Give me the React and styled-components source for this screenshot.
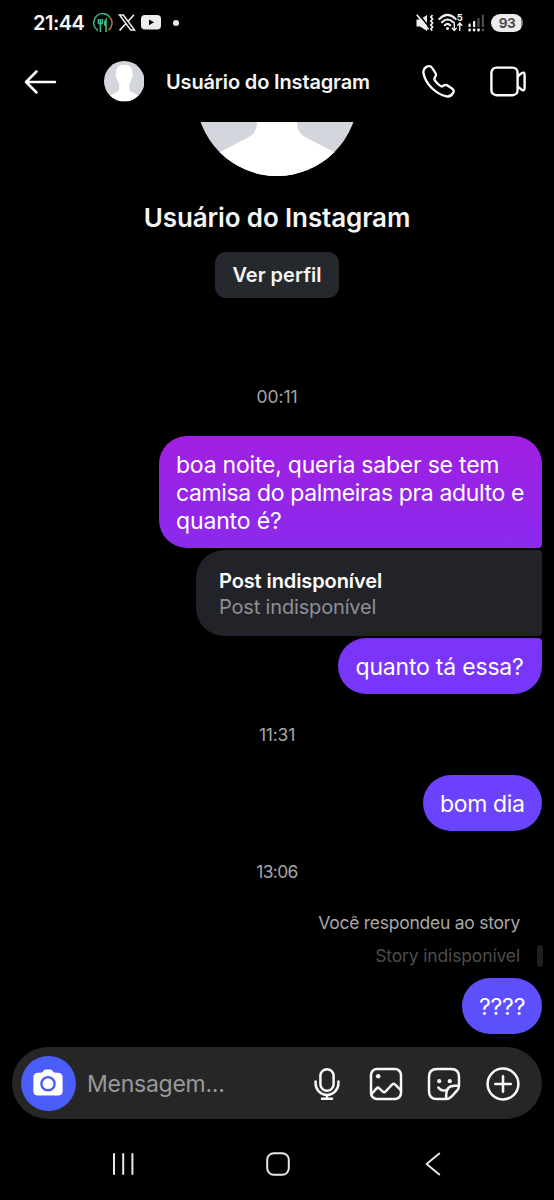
import styled, { createGlobalStyle } from "styled-components";

const GlobalStyle = createGlobalStyle`
  * {
    box-sizing: border-box;
  }
  body {
    margin: 0;
    background: #000;
    color: #f5f5f5;
    font-family: Inter, Roboto, sans-serif;
  }
  svg {
    display: block;
    flex: none;
  }
`;

const Screen = styled.main`
  width: 554px;
  height: 1200px;
  display: flex;
  flex-direction: column;
  overflow: hidden;
  background: #000;
`;

const StatusBar = styled.div`
  height: 45px;
  flex: none;
  display: flex;
  align-items: center;
  justify-content: space-between;
  padding: 0 31px 0 33px;
`;
const StatusLeft = styled.div`
  display: flex;
  align-items: center;
`;
const StatusRight = styled.div`
  display: flex;
  align-items: center;
`;
const Clock = styled.span`
  width: 60px;
  font-size: 20px;
  font-weight: 600;
  letter-spacing: -0.5px;
`;
const Gap = styled.span`
  width: ${(p) => p.$w}px;
`;
const Dot = styled.span`
  width: 6px;
  height: 6px;
  border-radius: 50%;
  background: #f0f0f0;
`;
const Battery = styled.span`
  width: 32px;
  height: 18px;
  border-radius: 9px;
  background: linear-gradient(90deg, #ececec 93%, #8a8a8a 93%);
  color: #4a4a4a;
  font-size: 13.5px;
  font-weight: 700;
  line-height: 18px;
  text-align: center;
  letter-spacing: -0.4px;
`;

const Header = styled.header`
  height: 77px;
  flex: none;
  display: flex;
  align-items: center;
  padding: 0 28px 4px 24px;
`;
const HeaderTitle = styled.h1`
  flex: 1;
  margin: 1px 0 0 22px;
  font-size: 20px;
  font-weight: 600;
  letter-spacing: -0.15px;
  white-space: nowrap;
`;
const BackIcon = styled.svg`
  margin-right: 46.5px;
`;
const PhoneIcon = styled.svg`
  margin-right: 35px;
`;

const Thread = styled.section`
  height: 925px;
  flex: none;
  display: flex;
  flex-direction: column;
  align-items: center;
  overflow: hidden;
  padding: 0 12px;
`;
const ProfilePic = styled.div`
  margin-top: -108px;
`;
const ProfileName = styled.h2`
  margin: 26px 0 18px;
  font-size: 26px;
  line-height: 32px;
  font-weight: 600;
  letter-spacing: -0.13px;
`;
const ProfileButton = styled.button`
  width: 124px;
  height: 46px;
  flex: none;
  padding: 0;
  border: 0;
  border-radius: 11px;
  background: #25282d;
  color: #f5f5f5;
  font: 600 20px Inter, sans-serif;
`;
const TimeStamp = styled.time`
  margin: ${(p) => p.$margin};
  font-size: 17.5px;
  line-height: 20px;
  letter-spacing: ${(p) => p.$track}px;
  color: #a3a5a8;
`;
const Bubble = styled.div`
  align-self: flex-end;
  width: ${(p) => p.$w}px;
  flex: none;
  padding: 14.6px 0 13.4px 17.5px;
  border-radius: ${(p) => p.$radius || "28px"};
  background: ${(p) => p.$bg};
  color: #fff;
  font-size: 23px;
  line-height: 28px;
`;
const Line = styled.div`
  white-space: nowrap;
  letter-spacing: ${(p) => p.$track}px;
`;
const PostCard = styled.div`
  align-self: flex-end;
  width: 346px;
  height: 86px;
  flex: none;
  margin: 2px 0;
  padding: 18px 23px;
  border-radius: 28px 4px 4px 28px;
  background: #222328;
  font-size: 20px;
  line-height: 26px;
`;
const PostTitle = styled.div`
  font-weight: 600;
  letter-spacing: -0.1px;
  color: #fff;
`;
const PostText = styled.div`
  letter-spacing: -0.16px;
  color: #8f9094;
`;
const StoryNote = styled.div`
  align-self: flex-end;
  margin-right: 22px;
  font-size: 17.5px;
  line-height: 20px;
  letter-spacing: -0.25px;
  color: #a8a8a8;
`;
const StoryQuote = styled.div`
  align-self: flex-end;
  display: flex;
  align-items: center;
  gap: 17px;
  height: 22px;
  margin: 12px -1px 11.5px 0;
  font-size: 17.5px;
  line-height: 22px;
  letter-spacing: -0.14px;
  color: #4c4c4c;
`;
const QuoteBar = styled.span`
  width: 6px;
  height: 22px;
  border-radius: 3px;
  background: #1f1f1f;
`;

const Composer = styled.div`
  height: 72px;
  flex: none;
  display: flex;
  align-items: center;
  margin: 0 12px;
  padding: 0 22.5px 0 8.5px;
  border-radius: 36px;
  background: #262626;
`;
const CameraButton = styled.div`
  width: 55px;
  height: 55px;
  flex: none;
  display: flex;
  align-items: center;
  justify-content: center;
  border-radius: 50%;
  background: #4a5df9;
`;
const Placeholder = styled.span`
  flex: 1;
  margin: 1px 0 0 11.5px;
  font-size: 23px;
  letter-spacing: -0.25px;
  color: #98999b;
`;
const Tools = styled.div`
  display: flex;
  align-items: center;
  gap: 24.5px;
  padding-top: 2px;
`;

const NavBar = styled.nav`
  flex: 1;
  display: flex;
  align-items: center;
  justify-content: space-between;
  padding: 8px 113px 0 112px;
`;
const HomeKey = styled.svg`
  position: relative;
  left: -1.5px;
`;

function Avatar({ size }) {
  return (
    <svg width={size} height={size} viewBox="0 0 162 162">
      <clipPath id={"round" + size}>
        <circle cx="81" cy="81" r="81" />
      </clipPath>
      <g clipPath={`url(#round${size})`}>
        <rect width="162" height="162" fill="#d3d6dc" />
        <path
          fill="#fff"
          d="M81 15C59 15 47 28 48 48C46 52 46 60 50 65C51 76 55 84 60 89L61 108C61 116 58 120 53 123L24 138C15 143 9 150 5 162H157C153 150 147 143 138 138L109 123C104 120 101 116 101 108L102 89C107 84 111 76 112 65C116 60 116 52 114 48C115 28 103 15 81 15Z"
        />
      </g>
    </svg>
  );
}

function StatusIcons() {
  return (
    <>
      <svg width="20" height="20" viewBox="0 0 20 20" fill="none">
        <path d="M5 17.3A9 9 0 1 1 17.3 4.8" stroke="#35b582" strokeWidth="1.5" />
        <path d="M17.3 4.8A9 9 0 0 1 15.5 17.2" stroke="#b9782e" strokeWidth="1.5" />
        <path d="M5.4 6V9.5Q5.4 11 7.4 11T9.4 9.5V6M7.4 6V19" stroke="#38c48c" strokeWidth="1.5" />
        <path d="M13 19V6.5Q11.4 8.5 11.7 12H13" stroke="#38c48c" strokeWidth="1.5" fill="#38c48c" />
      </svg>
      <Gap $w={5} />
      <svg width="18" height="17" viewBox="0 0 18 17" fill="none" stroke="#f0f0f0">
        <path d="M1.5 1H5.3L16.5 16H12.7Z" strokeWidth="1.5" />
        <path d="M16 .7L10.2 7.2M7.8 9.8L1.6 16.4" strokeWidth="1.6" />
      </svg>
      <Gap $w={5} />
      <svg width="20" height="15" viewBox="0 0 20 15">
        <rect width="20" height="14.5" rx="4" fill="#ededed" />
        <path d="M8 4.4V10.2L13 7.3Z" fill="#000" />
      </svg>
      <Gap $w={12} />
      <Dot />
    </>
  );
}

function SignalIcons() {
  return (
    <>
      <svg width="19" height="18" viewBox="0 0 19 18" fill="none" stroke="#f0f0f0">
        <path d="M1.5 5.4H5L12 1V17L5 12.4H1.5Z" fill="#f0f0f0" stroke="none" />
        <path d="M3.6 0L14.6 13.6" stroke="#000" strokeWidth="1.6" />
        <path d="M1.8 .8L13.4 15.4" strokeWidth="1.7" />
        <path d="M17.6 1.2L15.8 3L17.6 5L15.8 7L17.6 9L15.8 11L17.6 13L15.8 15L17.2 16.6" strokeWidth="1.7" />
      </svg>
      <Gap $w={4} />
      <svg width="26" height="19" viewBox="0 0 26 19" fill="none" stroke="#f0f0f0" strokeLinecap="round">
        <path d="M1.3 6Q9.5 -2.2 17.7 6M4 9.2Q9.5 3.8 15.2 9.2M6.8 12.2Q9.5 9.6 12.3 12.2" strokeWidth="2.1" />
        <circle cx="9.5" cy="15.6" r="1.5" fill="#f0f0f0" stroke="none" />
        <path d="M16.3 10V17.2M14.2 15.3L16.3 17.4L18.3 15.3M21.8 17.3V10.2M19.8 12.2L21.8 10L23.9 12.2" strokeWidth="1.4" />
        <text x="18.8" y="7.6" fontSize="9.5" fontWeight="700" fill="#f0f0f0" stroke="none">5</text>
      </svg>
      <Gap $w={4} />
      <svg width="17" height="18" viewBox="0 0 17 18">
        <g fill="#f0f0f0">
          <rect x=".5" y="9.5" width="2.2" height="3.6" rx=".6" />
          <rect x="5" y="7" width="2.2" height="6.1" rx=".6" />
          <rect x=".3" y="14.6" width="2.6" height="2.8" rx=".8" />
          <rect x="4.8" y="14.6" width="2.6" height="2.8" rx=".8" />
          <rect x="9.2" y="14.6" width="2.6" height="2.8" rx=".8" />
        </g>
        <g fill="#4d4d4d">
          <rect x="9.4" y="4" width="2.2" height="9.1" rx=".6" />
          <rect x="13.8" y=".8" width="2.2" height="12.3" rx=".6" />
          <rect x="13.6" y="14.6" width="2.6" height="2.8" rx=".8" />
        </g>
      </svg>
      <Gap $w={6} />
    </>
  );
}

function ComposerIcons() {
  const stroke = {
    fill: "none",
    stroke: "#f7f7f7",
    strokeWidth: 2.5,
    strokeLinecap: "round",
    strokeLinejoin: "round",
  };
  return (
    <Tools>
      <svg width="34" height="34" viewBox="0 0 34 34" {...stroke}>
        <rect x="10.4" y="2.2" width="13.2" height="21.6" rx="6.6" />
        <path d="M5.6 14.5V16.5A11.4 11.4 0 0 0 28.4 16.5V14.5M17 28V31.5M12 31.7H22" />
      </svg>
      <svg width="34" height="34" viewBox="0 0 34 34" {...stroke}>
        <rect x="2" y="2" width="30" height="30" rx="6" />
        <circle cx="9.2" cy="9.2" r="2.3" fill="#f7f7f7" stroke="none" />
        <path d="M2.5 27L7.6 21.4Q8.9 20 10.3 21.3L13.8 24.6Q15.2 25.9 16.5 24.5L23.3 17.4Q24.7 16 26 17.4L32 23.3" />
      </svg>
      <svg width="34" height="34" viewBox="0 0 34 34" {...stroke}>
        <path d="M19 32H10Q2 32 2 24.2V10Q2 2 10 2H24.2Q32 2 32 10V18.5Q32 21.5 30 23.7L24.5 29.6Q22.2 32 19 32Z" />
        <path d="M19.2 31.8V27.5Q19.2 18.8 27.8 18.8H31.8" />
        <path d="M11.3 20.5Q14.8 25.3 20.5 22.5" />
        <circle cx="12.2" cy="14.2" r="2.1" fill="#f7f7f7" stroke="none" />
        <circle cx="22.8" cy="14.2" r="2.1" fill="#f7f7f7" stroke="none" />
      </svg>
      <svg width="34" height="34" viewBox="0 0 34 34" {...stroke}>
        <circle cx="17" cy="17" r="15.4" />
        <path d="M17 9.2V24.8M9.2 17H24.8" />
      </svg>
    </Tools>
  );
}

export default function App() {
  return (
    <>
      <GlobalStyle />
      <Screen>
        <StatusBar>
          <StatusLeft>
            <Clock>21:44</Clock>
            <StatusIcons />
          </StatusLeft>
          <StatusRight>
            <SignalIcons />
            <Battery>93</Battery>
          </StatusRight>
        </StatusBar>

        <Header>
          <BackIcon width="33" height="26" viewBox="0 0 33 26" fill="none" stroke="#fff" strokeWidth="2.5" strokeLinecap="round" strokeLinejoin="round">
            <path d="M12.5 2.5L2 13L12.5 23.5M2 13H31" />
          </BackIcon>
          <Avatar size={40.5} />
          <HeaderTitle>Usuário do Instagram</HeaderTitle>
          <PhoneIcon width="33" height="33" viewBox="0 0 33 33" fill="none" stroke="#fff" strokeWidth="2.3" strokeLinejoin="round">
            <path d="M1.4 7.5C1 4.3 4 1.2 7 1.2C8.6 1.2 9.5 1.9 10.2 3L13.5 8.2C14.4 9.7 14.2 10.7 13.1 12C12 13.4 12 14.2 13 15.7C14.6 18 16.3 19.6 18.3 20.9C19.4 21.6 20.2 21.5 21.3 20.7C22.8 19.6 24 19.5 25.5 20.5L30 23.5C31.8 24.7 32.2 26 31.3 27.6C29.6 30.6 27.5 32 24.5 31.4C14.5 29.5 3 19 1.4 7.5Z" />
          </PhoneIcon>
          <svg width="36" height="31" viewBox="0 0 36 31" fill="none" stroke="#fff" strokeWidth="2.4" strokeLinejoin="round">
            <rect x="1.4" y="1.6" width="26.2" height="27.6" rx="5" />
            <path d="M27.6 10.5L31.3 7.4Q34.6 5.2 34.6 9V21.8Q34.6 25.6 31.3 23.4L27.6 20.3" />
          </svg>
        </Header>

        <Thread>
          <ProfilePic>
            <Avatar size={162} />
          </ProfilePic>
          <ProfileName>Usuário do Instagram</ProfileName>
          <ProfileButton>Ver perfil</ProfileButton>

          <TimeStamp $margin="89px 0 29px" $track={-0.1}>00:11</TimeStamp>
          <Bubble $w={383.5} $radius="28px 28px 4px 28px" $bg="linear-gradient(#a01fe2, #8b2aed)">
            <Line $track={-0.22}>boa noite, queria saber se tem</Line>
            <Line $track={-0.36}>camisa do palmeiras pra adulto e</Line>
            <Line $track={-0.15}>quanto é?</Line>
          </Bubble>
          <PostCard>
            <PostTitle>Post indisponível</PostTitle>
            <PostText>Post indisponível</PostText>
          </PostCard>
          <Bubble $w={204} $radius="28px 4px 28px 28px" $bg="linear-gradient(#7d33f7, #7538fb)">
            <Line $track={-0.2}>quanto tá essa?</Line>
          </Bubble>

          <TimeStamp $margin="31px 0 30px" $track={-0.2}>11:31</TimeStamp>
          <Bubble $w={119.5} $bg="linear-gradient(#6e40fe, #6a44ff)">
            <Line $track={-0.35}>bom dia</Line>
          </Bubble>

          <TimeStamp $margin="31px 0 31px" $track={-0.7}>13:06</TimeStamp>
          <StoryNote>Você respondeu ao story</StoryNote>
          <StoryQuote>
            Story indisponível
            <QuoteBar />
          </StoryQuote>
          <Bubble $w={80.5} $bg="linear-gradient(#604efd, #5b52fc)">
            <Line $track={-0.2}>????</Line>
          </Bubble>
        </Thread>

        <Composer>
          <CameraButton>
            <svg width="30" height="28" viewBox="0 0 30 28">
              <path
                fill="#fff"
                d="M10.7 1.5Q11.6 .5 13 .5H17Q18.4 .5 19.3 1.5L20.6 3.1Q21.2 3.8 22.2 3.8H25Q29.6 3.8 29.6 8.4V22Q29.6 26.6 25 26.6H5Q.4 26.6 .4 22V8.4Q.4 3.8 5 3.8H7.8Q8.8 3.8 9.4 3.1Z"
              />
              <circle cx="15" cy="14.7" r="6.6" fill="#fff" stroke="#4a5df9" strokeWidth="2.4" />
            </svg>
          </CameraButton>
          <Placeholder>Mensagem...</Placeholder>
          <ComposerIcons />
        </Composer>

        <NavBar>
          <svg width="22" height="24" viewBox="0 0 22 24" stroke="#e8e8e8" strokeWidth="2" strokeLinecap="round">
            <path d="M2 2V22M11.2 2V22M20.4 2V22" />
          </svg>
          <HomeKey width="24" height="24" viewBox="0 0 24 24" fill="none" stroke="#e8e8e8" strokeWidth="2">
            <rect x="1.2" y="1.2" width="21.6" height="21.6" rx="6.5" />
          </HomeKey>
          <svg width="16" height="24" viewBox="0 0 16 24" fill="none" stroke="#e8e8e8" strokeWidth="1.9" strokeLinecap="round" strokeLinejoin="round">
            <path d="M14.3 1.5L1.6 12L14.3 22.5" />
          </svg>
        </NavBar>
      </Screen>
    </>
  );
}
